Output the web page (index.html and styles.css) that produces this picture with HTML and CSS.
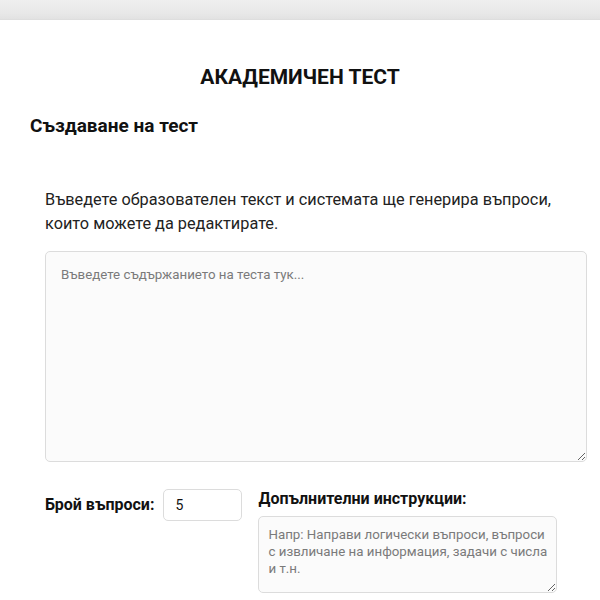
FILE: index.html
```html
<!DOCTYPE html>
<html lang="bg">
<head>
<meta charset="utf-8">
<title>Академичен тест</title>
<link rel="stylesheet" href="styles.css">
</head>
<body>
<div class="topbar"></div>
<main class="page">
  <h1 class="title">АКАДЕМИЧЕН ТЕСТ</h1>
  <h2 class="subtitle">Създаване на тест</h2>
  <section class="creator">
    <p class="intro">Въведете образователен текст и системата ще генерира въпроси, които можете да редактирате.</p>
    <textarea class="content-input" placeholder="Въведете съдържанието на теста тук..."></textarea>
    <div class="options">
      <div class="count-group">
        <label class="label" for="count">Брой въпроси:</label>
        <input class="count-input" id="count" type="text" value="5">
      </div>
      <div class="extra-group">
        <label class="label" for="extra">Допълнителни инструкции:</label>
        <textarea class="extra-input" id="extra" placeholder="Напр: Направи логически въпроси, въпроси с извличане на информация, задачи с числа и т.н."></textarea>
      </div>
    </div>
  </section>
</main>
</body>
</html>
```

FILE: styles.css
```css
* { box-sizing: border-box; }
html, body { margin: 0; padding: 0; background: #fff; }
body {
  font-family: Roboto, "Noto Sans", "DejaVu Sans", sans-serif;
  color: #111;
}
.topbar {
  height: 20px;
  background: linear-gradient(#efefef, #e8e8e8 70%, #e2e2e2);
  border-bottom: 1px solid #dedede;
}
.page {
  padding: 0 30px;
}
.title {
  margin: 45px 0 0;
  font-size: 21px;
  line-height: 25px;
  font-weight: 700;
  text-align: center;
  color: #111;
}
.subtitle {
  margin: 24px 0 0;
  font-size: 19px;
  line-height: 23px;
  font-weight: 700;
  color: #111;
}
.creator {
  padding-left: 15px;
}
.intro {
  margin: 51px 0 0;
  font-size: 16.3px;
  line-height: 24px;
  color: #222;
}
.content-input {
  display: block;
  margin-top: 15px;
  width: 542px;
  height: 211px;
  padding: 15px 15px;
  border: 1px solid #dcdcdc;
  border-radius: 5px;
  background: #fbfbfb;
  font-family: Roboto, "Noto Sans", sans-serif;
  font-size: 13.3px;
  line-height: 16px;
  color: #333;
  resize: both;
}
.content-input::placeholder,
.extra-input::placeholder { color: #7a7a7a; }
.options {
  display: flex;
  align-items: flex-start;
  gap: 16px;
  margin-top: 27px;
}
.count-group {
  display: flex;
  align-items: center;
  gap: 9px;
  height: 32px;
}
.label {
  font-size: 16px;
  line-height: 20px;
  font-weight: 700;
  color: #111;
}
.count-input {
  width: 79px;
  height: 32px;
  padding: 0 11px;
  border: 1px solid #dcdcdc;
  border-radius: 5px;
  background: #fff;
  font-family: Roboto, "Noto Sans", sans-serif;
  font-size: 14px;
  color: #111;
}
.extra-group {
  display: flex;
  flex-direction: column;
  gap: 7px;
}
.extra-input {
  display: block;
  width: 299px;
  height: 77px;
  padding: 9px 4px 8px 9px;
  border: 1px solid #dcdcdc;
  border-radius: 5px;
  background: #fbfbfb;
  font-family: Roboto, "Noto Sans", sans-serif;
  font-size: 13.3px;
  line-height: 17px;
  color: #333;
  resize: both;
}
```
